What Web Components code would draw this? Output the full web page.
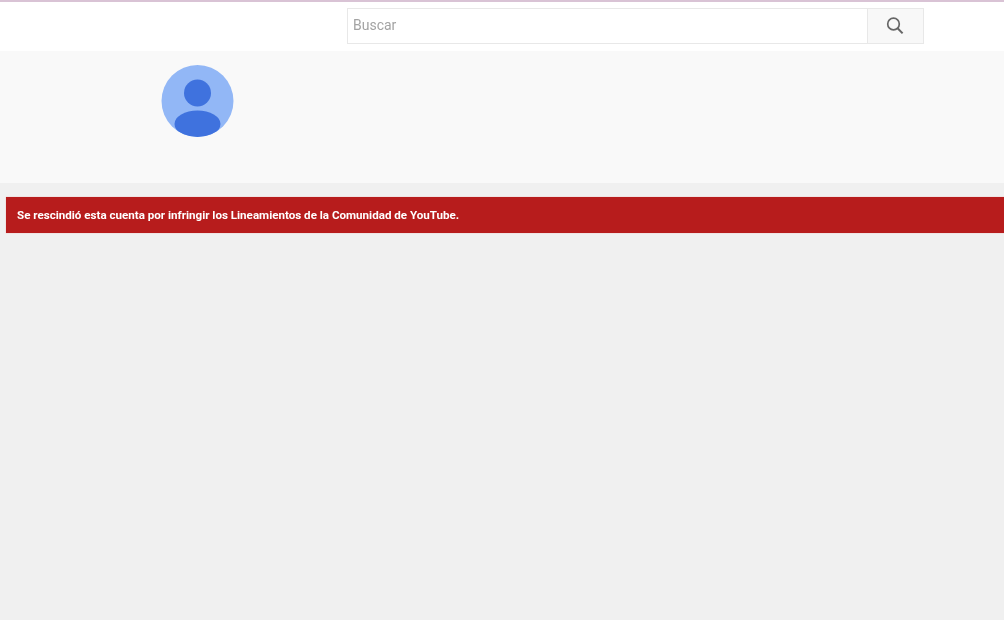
<!DOCTYPE html>
<html lang="es"><head><meta charset="utf-8"><title>YouTube</title>
<style>
html,body{margin:0;padding:0;height:100%;overflow:hidden;background:#f0f0f0;font-family:Roboto,"Liberation Sans",Arial,sans-serif}
body{display:flex;flex-direction:column}
</style></head><body>
<yt-masthead></yt-masthead>
<yt-channel-header></yt-channel-header>
<yt-alert>Se rescindió esta cuenta por infringir los Lineamientos de la Comunidad de YouTube.</yt-alert>
<script>
function def(name,html){customElements.define(name,class extends HTMLElement{constructor(){super();this.attachShadow({mode:'open'}).innerHTML=html;}});}
def('yt-masthead',`<style>
:host{display:flex;box-sizing:border-box;height:51px;background:#fff;border-top:2px solid #d9c3d5;padding:6px 80px 0 347px;flex:none}
.box{flex:1;display:flex;height:36px;box-sizing:border-box;border:1px solid #e8e8e8;filter:blur(.4px)}
.in{flex:1;padding-left:5px;font:14px/33px Roboto,"Liberation Sans",sans-serif;color:#a3a3a3;background:#fff}
.btn{width:55px;background:#f8f8f8;border-left:1px solid #e8e8e8;display:flex;align-items:center;justify-content:center}
svg{display:block;margin-left:-1px}
</style><div class="box"><div class="in">Buscar</div><div class="btn"><svg width="20" height="20" viewBox="0 0 20 20" fill="none" stroke="#666"><circle cx="8.5" cy="8" r="5.8" stroke-width="1.7"/><path d="M12.6 12.3 17.6 17.4" stroke-width="2"/></svg></div></div>`);
def('yt-channel-header',`<style>
:host{display:block;box-sizing:border-box;height:132px;background:#f9f9f9;padding:14px 0 0 161px;flex:none}
svg{display:block;filter:blur(.4px)}
</style><svg width="73" height="73" viewBox="0 0 73 73"><defs><clipPath id="c"><circle cx="36.5" cy="36" r="36"/></clipPath></defs><circle cx="36.5" cy="36" r="36" fill="#92b7f6"/><g clip-path="url(#c)" fill="#3f72de"><circle cx="36.5" cy="28" r="13.5"/><ellipse cx="36.5" cy="59" rx="23" ry="13.5"/></g></svg>`);
def('yt-alert',`<style>
:host{display:block;box-sizing:border-box;height:36px;margin:14px 0 0 6px;padding-left:11px;background:#b71c1c;color:#fff;font:700 11.6px/36px Roboto,"Liberation Sans",sans-serif;flex:none;white-space:nowrap;box-shadow:0 0 1px #e9a5a5}
span{display:inline-block;filter:blur(.4px)}
</style><span><slot></slot></span>`);
</script></body></html>
